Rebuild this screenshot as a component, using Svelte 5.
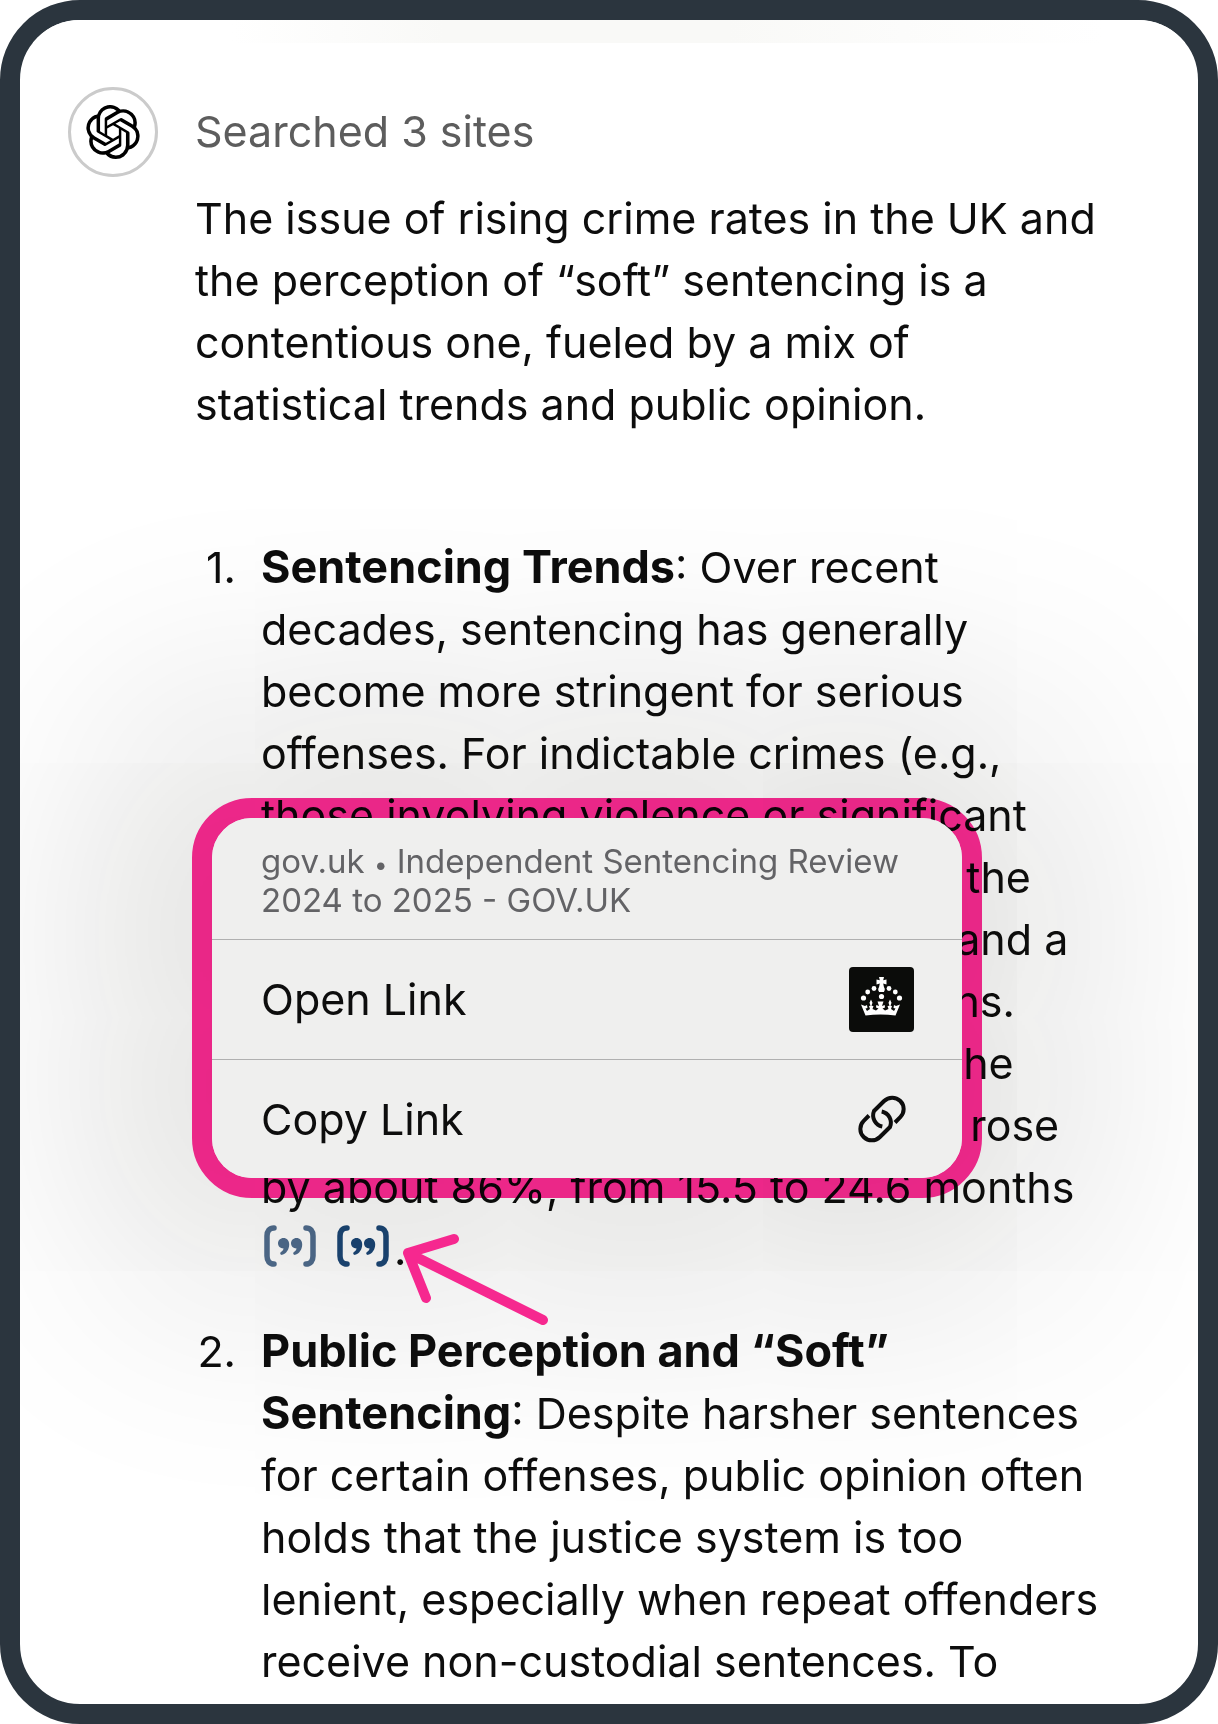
<script>
  const intro = [
    'The issue of rising crime rates in the UK and',
    'the perception of “soft” sentencing is a',
    'contentious one, fueled by a mix of',
    'statistical trends and public opinion.'
  ];
  const trends = [
    'decades, sentencing has generally',
    'become more stringent for serious',
    'offenses. For indictable crimes (e.g.,',
    'those involving violence or significant',
    'drug offenses), judges have made the',
    'average sentence longer in court, and a',
    'rise in the use of custodial sanctions.',
    'Between the years 2011 and 2021 the',
    'average custodial sentence length rose',
    'by about 86%, from 15.5 to 24.6 months'
  ];
  const perception = [
    'for certain offenses, public opinion often',
    'holds that the justice system is too',
    'lenient, especially when repeat offenders',
    'receive non-custodial sentences. To'
  ];
</script>

{#snippet quote()}
  <svg viewBox="0 0 52 42" aria-hidden="true">
    <path d="M10 3C5.500 3 3 6 3 11v20c0 5 2.500 8 7 8M42 3c4.500 0 7 3 7 8v20c0 5-2.500 8-7 8" fill="none" stroke="currentColor" stroke-width="5.500" stroke-linecap="round" />
    <path d="M19.500 13c3.300 0 5.700 2.600 5.700 6.400 0 5-3 9.200-7 10.400-1.800.5-2.800-1.600-1.200-2.700 1.400-1 2.300-2.100 2.600-3.600-3.200.1-5.600-2.200-5.600-5.200s2.400-5.300 5.500-5.300z" fill="currentColor" />
    <path d="M32.500 13c3.300 0 5.700 2.600 5.700 6.400 0 5-3 9.200-7 10.400-1.800.5-2.800-1.600-1.200-2.700 1.400-1 2.300-2.100 2.600-3.600-3.200.1-5.600-2.200-5.600-5.200s2.400-5.300 5.500-5.300z" fill="currentColor" />
  </svg>
{/snippet}

<main class="screen">
  <div class="strip"></div>
  <article class="message">
    <div class="avatar">
      <svg viewBox="0 0 24 24" role="img" aria-label="Assistant">
        <path d="M22.2819 9.8211a5.9847 5.9847 0 0 0-.5157-4.9108 6.0462 6.0462 0 0 0-6.5098-2.9A6.0651 6.0651 0 0 0 4.9807 4.1818a5.9847 5.9847 0 0 0-3.9977 2.9 6.0462 6.0462 0 0 0 .7427 7.0966 5.98 5.98 0 0 0 .511 4.9107 6.051 6.051 0 0 0 6.5146 2.9001A5.9847 5.9847 0 0 0 13.2599 24a6.0557 6.0557 0 0 0 5.7718-4.2058 5.9894 5.9894 0 0 0 3.9977-2.9001 6.0557 6.0557 0 0 0-.7475-7.0729zm-9.022 12.6081a4.4755 4.4755 0 0 1-2.8764-1.0408l.1419-.0804 4.7783-2.7582a.7948.7948 0 0 0 .3927-.6813v-6.7369l2.02 1.1686a.071.071 0 0 1 .038.052v5.5826a4.504 4.504 0 0 1-4.4945 4.4944zm-9.6607-4.1254a4.4708 4.4708 0 0 1-.5346-3.0137l.142.0852 4.783 2.7582a.7712.7712 0 0 0 .7806 0l5.8428-3.3685v2.3324a.0804.0804 0 0 1-.0332.0615L9.74 19.9502a4.4992 4.4992 0 0 1-6.1408-1.6464zM2.3408 7.8956a4.485 4.485 0 0 1 2.3655-1.9728V11.6a.7664.7664 0 0 0 .3879.6765l5.8144 3.3543-2.0201 1.1685a.0757.0757 0 0 1-.071 0l-4.8303-2.7865A4.504 4.504 0 0 1 2.3408 7.872zm16.5963 3.8558L13.1038 8.364 15.1192 7.2a.0757.0757 0 0 1 .071 0l4.8303 2.7913a4.4944 4.4944 0 0 1-.6765 8.1042v-5.6772a.79.79 0 0 0-.407-.667zm2.0107-3.0231l-.142-.0852-4.7735-2.7818a.7759.7759 0 0 0-.7854 0L9.409 9.2297V6.8974a.0662.0662 0 0 1 .0284-.0615l4.8303-2.7866a4.4992 4.4992 0 0 1 6.6802 4.66zM8.3065 12.863l-2.02-1.1638a.0804.0804 0 0 1-.038-.0567V6.0742a4.4992 4.4992 0 0 1 7.3757-3.4537l-.142.0805L8.704 5.459a.7948.7948 0 0 0-.3927.6813zm1.0976-2.3654l2.602-1.4998 2.6069 1.4998v2.9994l-2.5974 1.4997-2.6067-1.4997Z" />
      </svg>
    </div>
    <div class="body">
      <div class="status">Searched 3 sites</div>
      <p>
        {#each intro as text}<span class="line">{text}</span>{' '}{/each}
      </p>
      <ol>
        <li>
          <span class="number">1.</span>
          <div class="item">
            <span class="line"><strong>Sentencing Trends</strong>: Over recent</span>
            {#each trends as text}<span class="line">{text}</span>{' '}{/each}
            <span class="line cites">
              <a class="cite seen" href="#source-1" aria-label="Source 1">{@render quote()}</a>
              <a class="cite" href="#source-2" aria-label="Source 2">{@render quote()}</a>
              <span class="stop">.</span>
            </span>

            <div class="ring"></div>
            <div class="menu">
              <div class="source">gov.uk <span class="dot">•</span> Independent Sentencing Review<br />2024 to 2025 - GOV.UK</div>
              <button type="button">
                <span>Open Link</span>
                <svg class="crown" viewBox="0 0 65 65" aria-hidden="true">
                  <rect width="65" height="65" rx="4" fill="#0b0c0a" />
                  <g fill="#fff">
                    <path d="M30 10h5l-.8 3.200 3.300-.8v5l-3.300-.8.8 3.600c1 1 1.200 3.200-.2 4.800h-4.600c-1.400-1.600-1.200-3.800-.2-4.800l.8-3.600-3.300.8v-5l3.300.8z" />
                    <circle cx="32.500" cy="29.500" r="2.600" />
                    <circle cx="25" cy="21.500" r="2.400" /><circle cx="40" cy="21.500" r="2.400" />
                    <circle cx="18.700" cy="25" r="2.400" /><circle cx="46.300" cy="25" r="2.400" />
                    <circle cx="14.500" cy="31" r="2.600" /><circle cx="50.500" cy="31" r="2.600" />
                    <path d="M12 37.500l4 1.500 2-1 .5 3-2 .5 1.500 2.500 3-2-1-3 1.500-.3-1-3 1.500-3.200 1.500 3.200-1 3 2 .3-1 3 3.500 1.500 2.500-2-2.500-1 .3-2.500 2.700 1-1.500-4.500h6l-1.500 4.500 2.700-1 .3 2.500-2.500 1 2.500 2 3.500-1.500-1-3 2-.3-1-3 1.500-3.200 1.500 3.200-1 3 1.500.3-1 3 3 2 1.500-2.500-2-.5.5-3 2 1 4-1.500-4.500 11c-10-1.300-20-1.300-30 0z" />
                  </g>
                </svg>
              </button>
              <button type="button">
                <span>Copy Link</span>
                <svg class="chain" viewBox="0 0 48 48" aria-hidden="true">
                  <g fill="none" stroke="#0d0d0d" stroke-width="4">
                    <path d="M11 20.500L5.700 25.800a11.400 11.400 0 0 0 16.200 16.200L32 32a11.400 11.400 0 0 0-8.300-15.500" />
                    <path d="M37 27.500l5.300-5.300A11.400 11.400 0 0 0 26.100 6L16 16a11.400 11.400 0 0 0 8.300 15.500" />
                  </g>
                </svg>
              </button>
            </div>
            <svg class="arrow" viewBox="0 0 152 96" aria-hidden="true">
              <path d="M143 80L8 13l46-14M8 13l18 45" />
            </svg>
          </div>
        </li>
        <li>
          <span class="number">2.</span>
          <div class="item">
            <span class="line"><strong>Public Perception and “Soft”</strong></span>
            <span class="line"><strong>Sentencing</strong>: Despite harsher sentences</span>
            {#each perception as text}<span class="line">{text}</span>{' '}{/each}
          </div>
        </li>
      </ol>
    </div>
  </article>
</main>

<style>
  :global(body) {
    margin: 0;
    background: #fff;
  }
  .screen {
    position: relative;
    box-sizing: border-box;
    border: 20px solid #2b353e;
    border-radius: 80px;
    background: #fff;
    overflow: hidden;
    isolation: isolate;
    font-family: Inter, 'Liberation Sans', sans-serif;
    font-size: 43px;
    line-height: 62px;
    color: #0d0d0d;
  }
  .strip {
    height: 23px;
    background: linear-gradient(90deg, #fff 18%, #f9f9f7 36%, #f9f9f7 60%, #fcfcfb 75%, #fff 92%);
  }
  .message {
    display: grid;
    grid-template-columns: 90px 1fr;
    gap: 37px;
    padding: 44px 20px 12px 48px;
  }
  .avatar {
    display: grid;
    place-items: center;
    box-sizing: border-box;
    width: 90px;
    height: 90px;
    border: 3px solid #cbcbcb;
    border-radius: 50%;
  }
  .avatar svg {
    width: 54px;
    height: 54px;
  }
  .body {
    min-width: 0;
  }
  .status {
    padding: 13px 0 25px;
    color: #5d5d5d;
  }
  p {
    margin: 0 0 101px;
  }
  .line {
    display: block;
    white-space: nowrap;
  }
  ol {
    display: flex;
    flex-direction: column;
    gap: 40px;
    margin: 0;
    padding: 0;
    list-style: none;
  }
  li {
    display: grid;
    grid-template-columns: 41px 1fr;
    gap: 25px;
  }
  .number {
    text-align: right;
  }
  .item {
    position: relative;
    min-width: 0;
  }
  strong {
    font-size: 45px;
    font-weight: 700;
    line-height: 1;
  }
  .cites {
    display: flex;
    padding-left: 3px;
  }
  .cite {
    display: block;
    height: 42px;
    margin: 7px 21px 0 0;
    color: #1b4676;
  }
  .cite svg {
    display: block;
    width: 52px;
    height: 42px;
  }
  .seen {
    color: #4f6c8e;
  }
  .stop {
    margin-left: -16px;
  }
  .ring {
    position: absolute;
    top: 262px;
    left: -69px;
    width: 750px;
    height: 360px;
    border: 20px solid #ff2a95;
    border-radius: 60px;
    mix-blend-mode: multiply;
  }
  .menu {
    position: absolute;
    top: 282px;
    left: -49px;
    display: flex;
    flex-direction: column;
    width: 750px;
    height: 360px;
    border-radius: 40px;
    background: #efefee;
    box-shadow: 0 0 230px 120px rgba(20, 20, 10, 0.12);
    overflow: hidden;
  }
  .source {
    padding: 24px 0 19px 49px;
    font-size: 33px;
    line-height: 39px;
    color: #636366;
    white-space: nowrap;
  }
  .dot {
    font-size: 24px;
    line-height: 1;
  }
  .menu button {
    display: flex;
    flex: 1;
    align-items: center;
    justify-content: space-between;
    padding: 0 48px 0 49px;
    border: 0;
    border-top: 1px solid #b0b0b0;
    background: none;
    font: inherit;
    color: inherit;
  }
  .crown {
    width: 65px;
    height: 65px;
  }
  .chain {
    width: 48px;
    height: 48px;
    margin-right: 8px;
  }
  .arrow {
    position: absolute;
    top: 704px;
    left: 139px;
    width: 152px;
    height: 96px;
    overflow: visible;
    fill: none;
    stroke: #f6288f;
    stroke-width: 10px;
    stroke-linecap: round;
    stroke-linejoin: round;
  }
</style>
